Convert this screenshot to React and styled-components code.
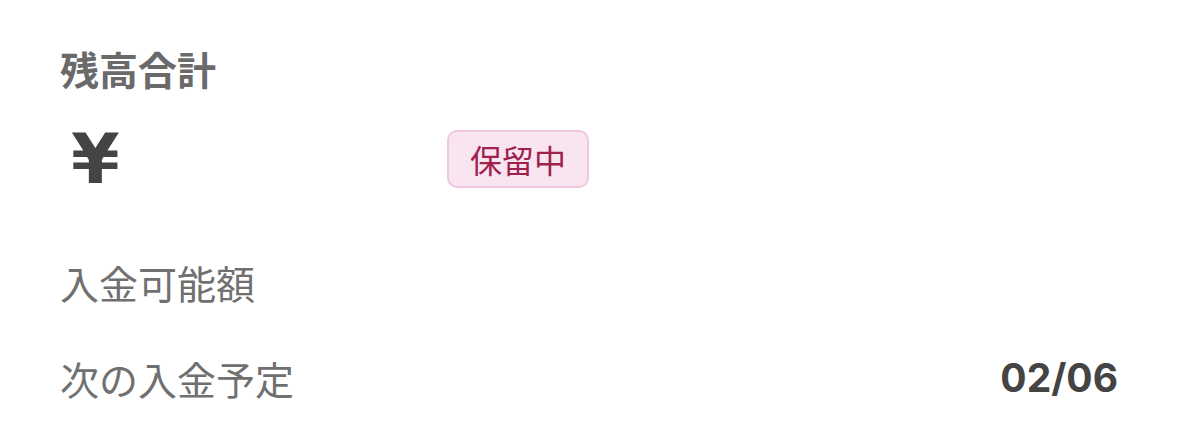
import React from "react";
import styled, { createGlobalStyle } from "styled-components";

const GlobalStyle = createGlobalStyle`
  html, body {
    margin: 0;
    padding: 0;
    background: #ffffff;
  }
  body {
    font-family: Inter, "Noto Sans CJK JP", sans-serif;
    -webkit-font-smoothing: antialiased;
  }
`;

const Card = styled.section`
  width: 1179px;
  height: 441px;
  box-sizing: border-box;
  padding: 44px 60px 0 60px;
  background: #ffffff;
  display: flex;
  flex-direction: column;
`;

const Heading = styled.h2`
  margin: 0;
  font-family: "Noto Sans CJK JP", sans-serif;
  font-size: 39px;
  line-height: 48px;
  font-weight: 700;
  color: #6a6a6a;
`;

const AmountRow = styled.div`
  margin-top: 27px;
  height: 80px;
  display: grid;
  grid-template-columns: 387px auto;
  align-items: center;
  justify-items: start;
`;

const Amount = styled.div`
  padding-left: 11px;
  font-family: "DejaVu Sans", sans-serif;
  font-size: 70px;
  line-height: 80px;
  font-weight: 700;
  color: #444444;
`;

const Badge = styled.span`
  display: inline-flex;
  align-items: center;
  justify-content: center;
  box-sizing: border-box;
  width: 142px;
  height: 58px;
  border: 2px solid #efc7df;
  border-radius: 10px;
  background: #f8e5f0;
  color: #a0214c;
  font-family: "Noto Sans CJK JP", sans-serif;
  font-size: 32px;
  line-height: 1;
`;

const InfoList = styled.div`
  margin-top: 35px;
  display: flex;
  flex-direction: column;
`;

const InfoRow = styled.div`
  height: 96px;
  display: flex;
  align-items: center;
  justify-content: space-between;
`;

const InfoLabel = styled.span`
  font-family: "Noto Sans CJK JP", sans-serif;
  font-size: 39px;
  line-height: 48px;
  font-weight: 400;
  color: #707070;
`;

const InfoValue = styled.span`
  font-family: Inter, sans-serif;
  font-size: 39px;
  line-height: 48px;
  font-weight: 700;
  margin-right: 1px;
  color: #444444;
`;

const rows = [
  { label: "入金可能額", value: "" },
  { label: "次の入金予定", value: "02/06" },
];

export default function App() {
  return (
    <>
      <GlobalStyle />
      <Card>
        <Heading>残高合計</Heading>
        <AmountRow>
          <Amount>¥</Amount>
          <Badge>保留中</Badge>
        </AmountRow>
        <InfoList>
          {rows.map((r) => (
            <InfoRow key={r.label}>
              <InfoLabel>{r.label}</InfoLabel>
              {r.value && <InfoValue>{r.value}</InfoValue>}
            </InfoRow>
          ))}
        </InfoList>
      </Card>
    </>
  );
}
